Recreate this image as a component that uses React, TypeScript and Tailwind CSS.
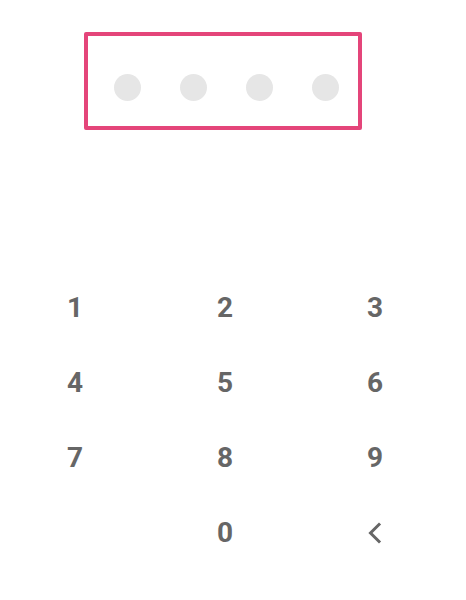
import { useState } from "react";

const KEYS = ["1", "2", "3", "4", "5", "6", "7", "8", "9", "", "0", "back"];

function BackIcon() {
  return (
    <svg width="20" height="24" viewBox="0 0 20 24" fill="none">
      <path
        d="M14 3.5L5.5 12l8.5 8.5"
        stroke="#666666"
        strokeWidth="3"
        strokeLinecap="square"
      />
    </svg>
  );
}

export default function App() {
  const [pin, setPin] = useState("");

  const press = (key: string) => {
    if (key === "back") {
      setPin((p) => p.slice(0, -1));
    } else if (key && pin.length < 4) {
      setPin((p) => p + key);
    }
  };

  return (
    <div
      className="w-[450px] bg-white pt-[32px]"
      style={{ fontFamily: "Roboto, 'Open Sans', sans-serif" }}
    >
      {/* PIN display */}
      <div className="ml-[84px] flex h-[98px] w-[278px] items-center justify-center gap-[39px] rounded-[2px] border-[4px] border-[#e4457a] pl-[6px] pt-[12px]">
        {[0, 1, 2, 3].map((i) => (
          <div
            key={i}
            className={`h-[27px] w-[27px] rounded-full ${
              i < pin.length ? "bg-[#e4457a]" : "bg-[#e6e6e6]"
            }`}
          />
        ))}
      </div>

      {/* Keypad */}
      <div className="mt-[140px] grid grid-cols-3">
        {KEYS.map((key, i) => (
          <button
            key={i}
            onClick={() => press(key)}
            className="flex h-[75px] items-center justify-center text-[28px] font-bold text-[#666666]"
          >
            {key === "back" ? <BackIcon /> : key}
          </button>
        ))}
      </div>
    </div>
  );
}
